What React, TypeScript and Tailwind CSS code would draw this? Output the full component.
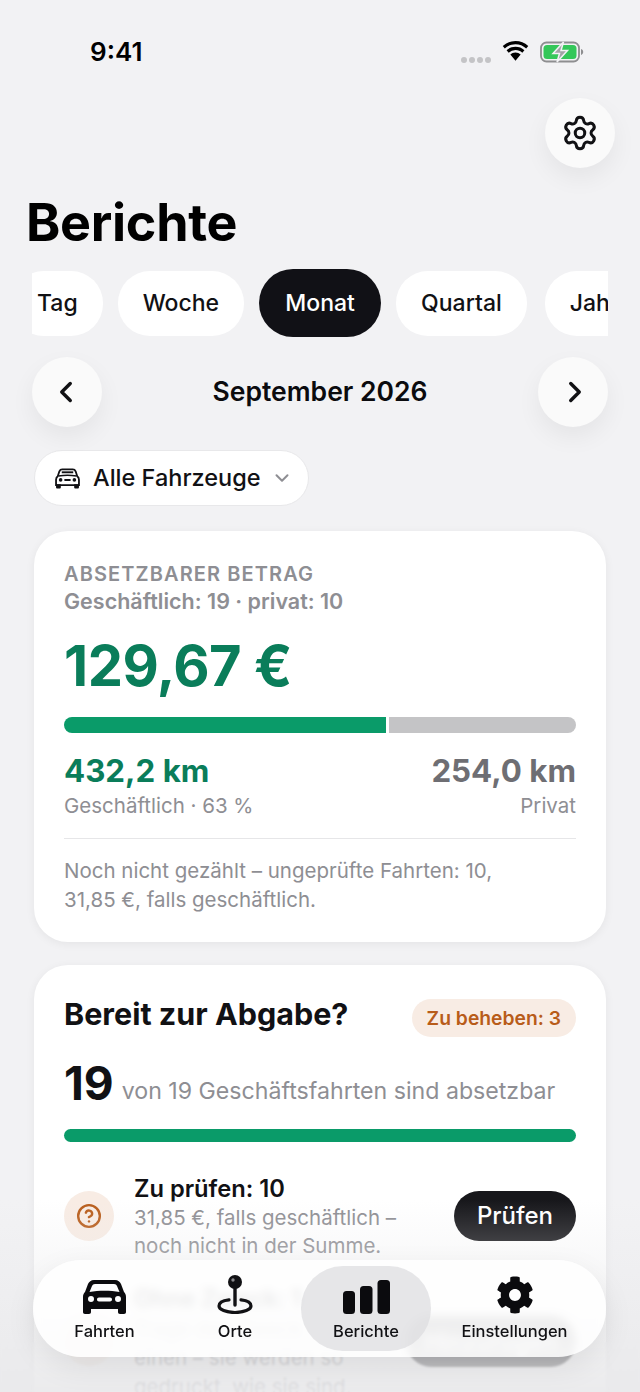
import { ChevronDown, ChevronLeft, ChevronRight, Settings, CircleHelp } from "lucide-react";
import { FaCog } from "react-icons/fa";

function NavCar() {
  return (
    <svg viewBox="0 0 43 34" className="h-[34px] w-[43px]" fill="#0b0b0e">
      <path
        fillRule="evenodd"
        d="M11 0h21c3 0 5 1.800 6 4l3 8c1.300 1.300 2 3 2 5v15c0 1.300-.7 2-2 2h-4c-1.300 0-2-.7-2-2v-3H8v3c0 1.300-.7 2-2 2H2c-1.300 0-2-.7-2-2V17c0-2 .7-3.700 2-5l3-8c1-2.200 3-4 6-4zm1 4c-1.500 0-2.500.8-3 2l-2.500 6c4.500-.8 10-1.200 15-1.200s10.500.4 15 1.200L34 6c-.5-1.200-1.500-2-3-2H12zM8 16a3 3 0 1 0 0 6 3 3 0 0 0 0-6zm27 0a3 3 0 1 0 0 6 3 3 0 0 0 0-6zm-19 1.500c-1.200 0-2 .8-2 2s.8 2 2 2h11c1.200 0 2-.8 2-2s-.8-2-2-2H16z"
      />
    </svg>
  );
}

function ChipCar() {
  return (
    <svg viewBox="0 0 26 22" className="h-[21px] w-[25px]" fill="none">
      <path d="M7.500 1.500h11c1.500 0 2.500.8 3 2l1.700 5.200c1.200.9 1.800 2.100 1.800 3.500V18H1v-5.800c0-1.400.6-2.600 1.800-3.500L4.500 3.500c.5-1.200 1.500-2 3-2z" stroke="#111114" strokeWidth="1.900" fill="#fff" />
      <path d="M3.500 8.500c6-1.200 13-1.200 19 0" stroke="#111114" strokeWidth="1.600" />
      <path d="M7 4.500h12" stroke="#111114" strokeWidth="2" />
      <circle cx="5.800" cy="12.500" r="1.900" fill="#111114" />
      <circle cx="20.200" cy="12.500" r="1.900" fill="#111114" />
      <rect x="9.500" y="11.500" width="7" height="2" rx="1" fill="#111114" />
      <path d="M1 17h5v3.500c0 .7-.4 1-1 1H2c-.6 0-1-.3-1-1V17zm19 0h5v3.500c0 .7-.4 1-1 1h-3c-.6 0-1-.3-1-1V17z" fill="#111114" />
    </svg>
  );
}

function PinIcon() {
  return (
    <svg viewBox="0 0 36 39" className="h-[39px] w-[36px]" fill="none">
      <path d="M12 24.800C5 25.500 2 28 2 31c0 3.600 7 6.500 16 6.500s16-2.900 16-6.500c0-3-3-5.500-10-6.200" stroke="#111114" strokeWidth="3.200" strokeLinecap="round" />
      <path d="M18 12v18" stroke="#111114" strokeWidth="3.400" strokeLinecap="round" />
      <circle cx="18" cy="7" r="7" fill="#111114" />
      <circle cx="16" cy="5" r="1.700" fill="#8a8a8e" />
    </svg>
  );
}

function BarsIcon() {
  return (
    <svg viewBox="0 0 47 34" className="h-[34px] w-[47px]" fill="#0b0b0e">
      <rect x="0" y="11" width="12" height="23" rx="3.500" />
      <rect x="17" y="6" width="12.500" height="28" rx="3.500" />
      <rect x="34.500" y="0" width="12.500" height="34" rx="3.500" />
    </svg>
  );
}

function Wifi() {
  return (
    <svg viewBox="0 0 26 20" className="h-[22px] w-[29px]" fill="#000">
      <path d="M13 3c3.700 0 7 1.400 9.700 3.800l1.900-2.300A17.500 17.500 0 0 0 13 0 17.500 17.500 0 0 0 1.400 4.500l1.900 2.300C6 4.400 9.300 3 13 3z" />
      <path d="M13 8.200c2.300 0 4.500.9 6.200 2.400l1.900-2.300A12.300 12.300 0 0 0 13 5.200c-3.100 0-5.900 1.100-8.100 3.100l1.900 2.300A9.300 9.300 0 0 1 13 8.200z" />
      <path d="M13 10.400c-1.900 0-3.500.7-4.700 1.800L13 18l4.700-5.800a6.900 6.900 0 0 0-4.700-1.800z" />
    </svg>
  );
}

function Battery() {
  return (
    <svg viewBox="0 0 44 22" className="h-[22px] w-[44px]">
      <rect x="1" y="1.500" width="38" height="19" rx="5.500" fill="none" stroke="#8e8e90" strokeWidth="1.800" />
      <rect x="3.500" y="4" width="33" height="14" rx="3.500" fill="#34c759" />
      <path d="M41 8v6c1.400-.4 2.200-1.600 2.200-3S42.400 8.400 41 8z" fill="#8e8e90" />
      <path d="M23.500 1 13 12.500h6.500L17 21l10.500-11.500H21z" fill="#a2a2a6" stroke="#f2f2f4" strokeWidth="1.500" />
    </svg>
  );
}

function Chip({ label, active }: { label: string; active?: boolean }) {
  return (
    <div
      className={
        active
          ? "flex h-[68px] w-[122px] shrink-0 items-center justify-center rounded-[34px] bg-[#111116] text-[23px] font-medium text-white"
          : "flex h-[65px] shrink-0 items-center justify-center rounded-[32px] bg-white px-[25px] text-[23px] font-medium text-[#111114]"
      }
    >
      {label}
    </div>
  );
}

function RoundButton({ children }: { children: React.ReactNode }) {
  return (
    <div className="flex h-[70px] w-[70px] items-center justify-center rounded-full bg-[#fafafa] shadow-[0_10px_24px_rgba(0,0,0,0.06)]">
      {children}
    </div>
  );
}

function NavItem({ label, icon, active, width }: { label: string; icon: React.ReactNode; active?: boolean; width: string }) {
  return (
    <div className={`flex h-[85px] flex-col items-center justify-end pb-[10px] ${width} ${active ? "rounded-[42px] bg-[#dcdcde]/70" : ""}`}>
      <div className="flex h-[40px] items-end">{icon}</div>
      <div className="mt-[7px] text-[16.5px] font-medium leading-[20px] text-[#111114]">{label}</div>
    </div>
  );
}

export default function App() {
  return (
    <div className="relative h-[1392px] w-[640px] overflow-hidden bg-[#f2f2f4] font-['Inter','Liberation_Sans',sans-serif]">
      <div className="flex h-[98px] items-start justify-between pl-[90px] pr-[56px] pt-[37px]">
        <div className="text-[26px] font-semibold leading-[30px] text-black">9:41</div>
        <div className="flex items-center gap-[10px] pt-[4px]">
          <div className="mt-[16px] flex gap-[2px]">
            <span className="h-[6px] w-[6px] rounded-full bg-[#c4c4c6]" />
            <span className="h-[6px] w-[6px] rounded-full bg-[#c4c4c6]" />
            <span className="h-[6px] w-[6px] rounded-full bg-[#c4c4c6]" />
            <span className="h-[6px] w-[6px] rounded-full bg-[#c4c4c6]" />
          </div>
          <Wifi />
          <Battery />
        </div>
      </div>

      <div className="flex justify-end pr-[25px]">
        <RoundButton>
          <Settings className="h-[38px] w-[38px] text-[#111114]" strokeWidth={1.900} />
        </RoundButton>
      </div>

      <h1 className="mt-[25px] pl-[26px] text-[52px] font-bold leading-[60px] tracking-[-0.3px] text-black">Berichte</h1>

      <div className="mx-[32px] mt-[14px] flex h-[72px] items-center gap-[15px] overflow-hidden">
        <div className="-ml-[20px]">
          <Chip label="Tag" />
        </div>
        <Chip label="Woche" />
        <Chip label="Monat" active />
        <Chip label="Quartal" />
        <div className="ml-[3px]">
          <Chip label="Jahr" />
        </div>
      </div>

      <div className="mx-[32px] mt-[18px] flex items-center justify-between">
        <RoundButton>
          <ChevronLeft className="h-[34px] w-[34px] -translate-x-px text-[#111114]" strokeWidth={2.400} />
        </RoundButton>
        <div className="text-[26.5px] font-semibold text-[#0b0b0e]">September 2026</div>
        <RoundButton>
          <ChevronRight className="h-[34px] w-[34px] translate-x-[2px] text-[#111114]" strokeWidth={2.400} />
        </RoundButton>
      </div>

      <div className="ml-[34px] mt-[23px] flex h-[56px] w-[275px] items-center rounded-[28px] border border-[#e8e8ea] bg-white pl-[20px]">
        <ChipCar />
        <span className="ml-[13px] text-[23.5px] font-medium text-[#111114]">Alle Fahrzeuge</span>
        <ChevronDown className="ml-[10px] h-[22px] w-[22px] text-[#8e8e93]" strokeWidth={2.200} />
      </div>

      <section className="mx-[34px] mt-[25px] h-[411px] rounded-[34px] bg-white px-[30px] pt-[31px] shadow-[0_2px_10px_rgba(0,0,0,0.06)]">
        <div className="text-[20px] font-semibold leading-[24px] tracking-[1.100px] text-[#8e8e93]">ABSETZBARER BETRAG</div>
        <div className="mt-[2px] text-[21.500px] font-semibold leading-[26px] text-[#8e8e93]">Geschäftlich: 19 · privat: 10</div>
        <div className="mt-[20px] text-[56px] font-bold leading-[64px] tracking-[-0.5px] text-[#0a7d5a]">129,67 €</div>
        <div className="mt-[19px] flex h-[16px] gap-[3px] overflow-hidden rounded-full">
          <div className="w-[322px] bg-[#0a9b69]" />
          <div className="flex-1 bg-[#c4c4c6]" />
        </div>
        <div className="mt-[19px] flex items-start justify-between">
          <div>
            <div className="text-[31.300px] font-bold leading-[38px] text-[#0a7d5a]">432,2 km</div>
            <div className="mt-[2px] text-[20.500px] leading-[28px] text-[#8e8e93]">Geschäftlich · 63 %</div>
          </div>
          <div className="text-right">
            <div className="text-[31.300px] font-bold leading-[38px] text-[#6e6e73]">254,0 km</div>
            <div className="mt-[2px] text-[20.500px] leading-[28px] text-[#8e8e93]">Privat</div>
          </div>
        </div>
        <div className="mt-[18px] border-t border-[#e6e6e8] pt-[18px] text-[20.500px] leading-[28.500px] text-[#8e8e93]">
          Noch nicht gezählt – ungeprüfte Fahrten: 10,
          <br />
          31,85 €, falls geschäftlich.
        </div>
      </section>

      <section className="mx-[34px] mt-[23px] h-[600px] rounded-[34px] bg-white px-[30px] pt-[30px] shadow-[0_2px_10px_rgba(0,0,0,0.06)]">
        <div className="flex items-start justify-between">
          <div className="text-[30.500px] font-bold leading-[38px] text-[#111114]">Bereit zur Abgabe?</div>
          <div className="mt-[4px] flex h-[38px] items-center rounded-full bg-[#f8ece4] px-[15px] text-[19.300px] font-semibold text-[#b85c1a]">Zu beheben: 3</div>
        </div>
        <div className="mt-[18px] flex items-baseline">
          <span className="text-[46px] font-bold leading-[56px] text-[#111114]">19</span>
          <span className="ml-[8px] -translate-y-px text-[23.150px] text-[#8e8e93]">von 19 Geschäftsfahrten sind absetzbar</span>
        </div>
        <div className="mt-[18px] h-[13px] rounded-full bg-[#0a9b69]" />
        <div className="mt-[31px] flex items-start">
          <div className="mt-[18px] flex h-[50px] w-[50px] shrink-0 items-center justify-center rounded-full bg-[#f8ece4]">
            <CircleHelp className="h-[26px] w-[26px] text-[#b85c1a]" strokeWidth={2.200} />
          </div>
          <div className="ml-[20px] flex-1">
            <div className="text-[23.700px] font-semibold leading-[31px] text-[#111114]">Zu prüfen: 10</div>
            <div className="text-[20.500px] leading-[28px] text-[#8e8e93]">
              31,85 €, falls geschäftlich –
              <br />
              noch nicht in der Summe.
            </div>
          </div>
          <div className="mt-[18px] flex h-[50px] w-[122px] items-center justify-center rounded-full bg-[#17171b] text-[24px] font-medium text-white">Prüfen</div>
        </div>
        <div className="mt-[23px] flex items-start">
          <div className="mt-[33px] flex h-[50px] w-[50px] shrink-0 items-center justify-center rounded-full bg-[#f8ece4]" />
          <div className="ml-[20px] flex-1">
            <div className="text-[23.700px] font-semibold leading-[31px] text-[#111114]">Ohne Zweck: 1</div>
            <div className="text-[20.500px] leading-[29px] text-[#8e8e93]">
              Trage den Zweck
              <br />
              einen – sie werden so
              <br />
              gedruckt, wie sie sind.
            </div>
          </div>
          <div className="mt-[33px] flex h-[51px] w-[170px] shrink-0 items-center justify-center rounded-full bg-[#17171b] text-[24px] font-medium text-white">Hinzufügen</div>
        </div>
      </section>

      <div className="pointer-events-none absolute inset-x-0 bottom-0 h-[192px] bg-gradient-to-b from-[#e9e9eb00] to-[#e9e9ebe6]" />
      <div className="pointer-events-none absolute inset-x-0 bottom-0 h-[50px] backdrop-blur-[1px]" />

      <nav className="absolute left-[33px] top-[1260px] flex h-[97px] w-[573px] items-center rounded-[48px] bg-white/85 pl-[11px] shadow-[0_10px_30px_rgba(0,0,0,0.08)] backdrop-blur-[4px]">
        <NavItem label="Fahrten" width="w-[121px]" icon={<NavCar />} />
        <NavItem label="Orte" width="w-[136px] pl-[4px]" icon={<PinIcon />} />
        <NavItem label="Berichte" active width="w-[130px]" icon={<BarsIcon />} />
        <NavItem label="Einstellungen" width="w-[167px]" icon={<FaCog className="h-[38px] w-[38px] text-[#0b0b0e]" />} />
      </nav>
    </div>
  );
}
